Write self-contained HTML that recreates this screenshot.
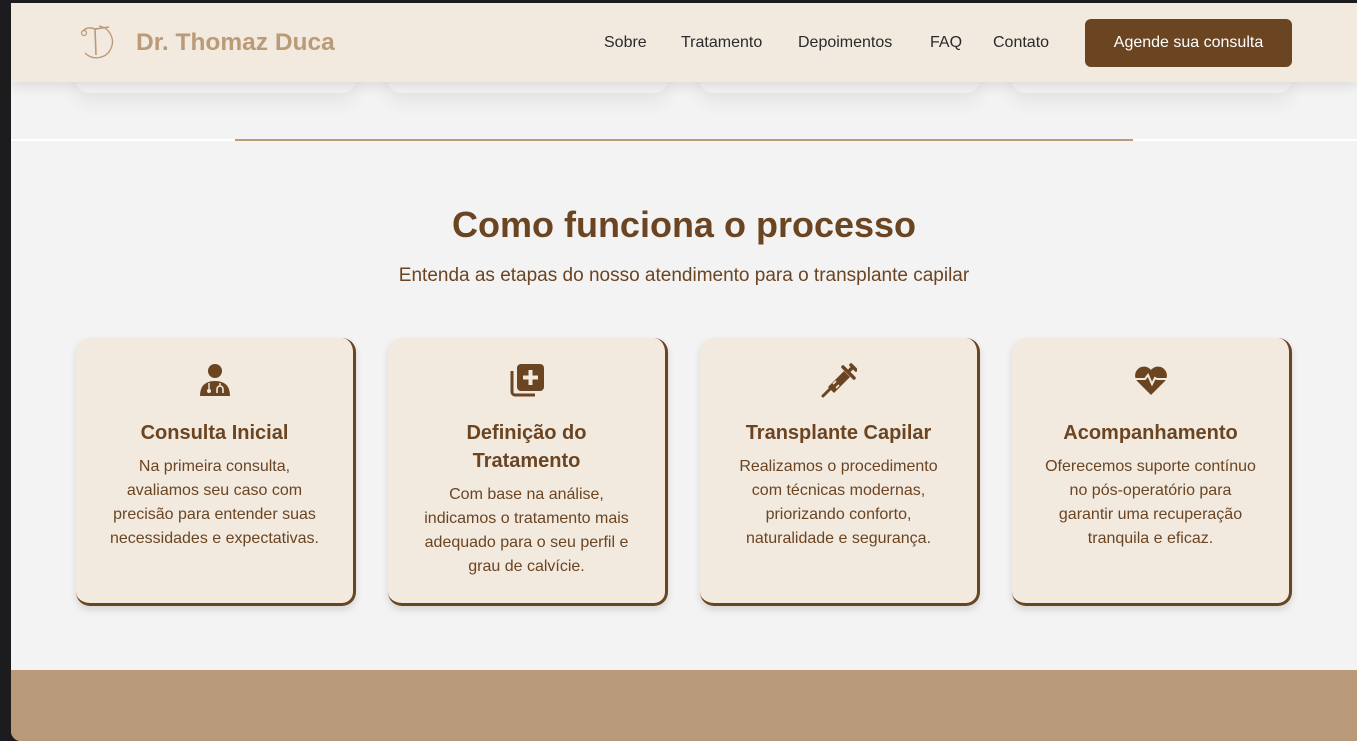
<!DOCTYPE html>
<html><head><meta charset="utf-8"><style>
*{margin:0;padding:0;box-sizing:border-box}
body{width:1357px;height:741px;overflow:hidden;background:#1c1c1e;font-family:"Liberation Sans",sans-serif;position:relative}
.page{position:absolute;left:11px;top:3px;right:0;bottom:0;background:#f3f3f3;border-bottom-left-radius:10px;overflow:hidden}
.ghost{position:absolute;top:20px;width:279px;height:70px;border-radius:12px;box-shadow:0 10px 18px rgba(0,0,0,.06);background:#f3f3f3}
header{position:absolute;left:0;top:0;right:0;height:79px;background:#f2e9df;box-shadow:0 4px 12px rgba(0,0,0,.1)}
.logo{position:absolute;left:66px;top:20px}
.brand{position:absolute;left:125px;top:26px;font-size:24.5px;font-weight:bold;color:#bb9a77}
nav a{position:absolute;top:31px;font-size:16px;color:#2a2a2a;text-decoration:none}
.btn{position:absolute;left:1074px;top:16px;width:207px;height:48px;background:#6b4522;color:#fff;border-radius:6px;font-size:16px;text-align:center;line-height:48px}
.line{position:absolute;left:224px;top:136px;width:898px;height:2px;background:#bb9a77}
.wline{position:absolute;left:0;top:136px;width:1357px;height:2px;background:#fff}
h2{position:absolute;left:0;right:0;top:201px;text-align:center;font-size:36px;color:#6b4522;font-weight:bold}
.sub{position:absolute;left:0;right:0;top:262px;text-align:center;font-size:19px;color:#6b4522}
.card{position:absolute;top:335px;width:280px;height:268px;background:#f2e9df;border-radius:14px;border-right:3px solid #6b4522;border-bottom:3px solid #6b4522;box-shadow:0 4px 8px rgba(0,0,0,.12);text-align:center;color:#6b4522}
.card svg{position:absolute;left:50%;margin-left:-18px;top:24px}
.card h3{position:absolute;left:0;right:0;top:81px;font-size:20px;line-height:28px;padding:0 40px}
.card p{position:absolute;left:0;right:0;font-size:16px;line-height:24px;padding:0 30px}
.foot{position:absolute;left:0;right:0;top:667px;bottom:0;background:#b89a7a}
</style></head><body>
<div class="page">
<div class="ghost" style="left:65px"></div><div class="ghost" style="left:377px"></div><div class="ghost" style="left:689px"></div><div class="ghost" style="left:1001px"></div>
<div class="wline"></div><div class="line"></div>
<header>
<svg class="logo" width="38" height="38" viewBox="0 0 38 38"><path d="M22 3 A16 16 0 1 1 8 30" fill="none" stroke="#bb9a77" stroke-width="1.3"/><path d="M6 8 Q10 3 18 6 L32 4 M18 6 L19 32" fill="none" stroke="#bb9a77" stroke-width="1.6"/><circle cx="7" cy="10" r="2.5" fill="none" stroke="#bb9a77" stroke-width="1.2"/></svg>
<div class="brand">Dr. Thomaz Duca</div>
<nav><a style="left:593px">Sobre</a><a style="left:670px">Tratamento</a><a style="left:787px">Depoimentos</a><a style="left:919px">FAQ</a><a style="left:982px">Contato</a></nav>
<div class="btn">Agende sua consulta</div>
</header>
<h2>Como funciona o processo</h2>
<div class="sub">Entenda as etapas do nosso atendimento para o transplante capilar</div>
<div class="card" style="left:65px">
<svg width="36" height="36" viewBox="0 0 36 36"><circle cx="18" cy="9" r="7" fill="#6b4522"/><path d="M3 34 Q3 19 18 19 Q33 19 33 34Z" fill="#6b4522"/><circle cx="12" cy="29" r="2" fill="#f2e9df"/><path d="M20 31 V27 A3 3 0 0 1 26 27 V31" stroke="#f2e9df" stroke-width="1.6" fill="none"/><path d="M12 27 V21 M23 24 V21" stroke="#f2e9df" stroke-width="1.4"/></svg>
<h3>Consulta Inicial</h3><p style="top:117px">Na primeira consulta, avaliamos seu caso com precisão para entender suas necessidades e expectativas.</p></div>
<div class="card" style="left:377px">
<svg width="36" height="36" viewBox="0 0 36 36"><path d="M3 9 V30 A3 3 0 0 0 6 33 H26" stroke="#6b4522" stroke-width="3" fill="none"/><rect x="8" y="2" width="27" height="27" rx="4" fill="#6b4522"/><path d="M21.5 8 V23 M14 15.5 H29" stroke="#f2e9df" stroke-width="4"/></svg>
<h3>Definição do Tratamento</h3><p style="top:145px">Com base na análise, indicamos o tratamento mais adequado para o seu perfil e grau de calvície.</p></div>
<div class="card" style="left:689px">
<svg width="36" height="36" viewBox="0 0 36 36"><path d="M2 34 L9 27" stroke="#6b4522" stroke-width="3" stroke-linecap="round"/><path d="M7 25 L23 9 L29 15 L13 31Z" fill="#6b4522"/><path d="M22 5 L33 16 M27 10 L32 5 M30 3 L35 8" stroke="#6b4522" stroke-width="3.5" stroke-linecap="round"/><path d="M12 22 L15 19 M15 26 L18 23" stroke="#f2e9df" stroke-width="1.6"/></svg>
<h3>Transplante Capilar</h3><p style="top:117px">Realizamos o procedimento com técnicas modernas, priorizando conforto, naturalidade e segurança.</p></div>
<div class="card" style="left:1001px">
<svg width="36" height="36" viewBox="0 0 36 36"><path d="M18 33 L4 19 A8.5 8.5 0 0 1 18 8 A8.5 8.5 0 0 1 32 19Z" fill="#6b4522"/><path d="M1 17 H12 L15 13 L19 22 L22 16 L24 17 H35" stroke="#f2e9df" stroke-width="2" fill="none"/></svg>
<h3>Acompanhamento</h3><p style="top:117px">Oferecemos suporte contínuo no pós-operatório para garantir uma recuperação tranquila e eficaz.</p></div>
<div class="foot"></div>
</div>
</body></html>
